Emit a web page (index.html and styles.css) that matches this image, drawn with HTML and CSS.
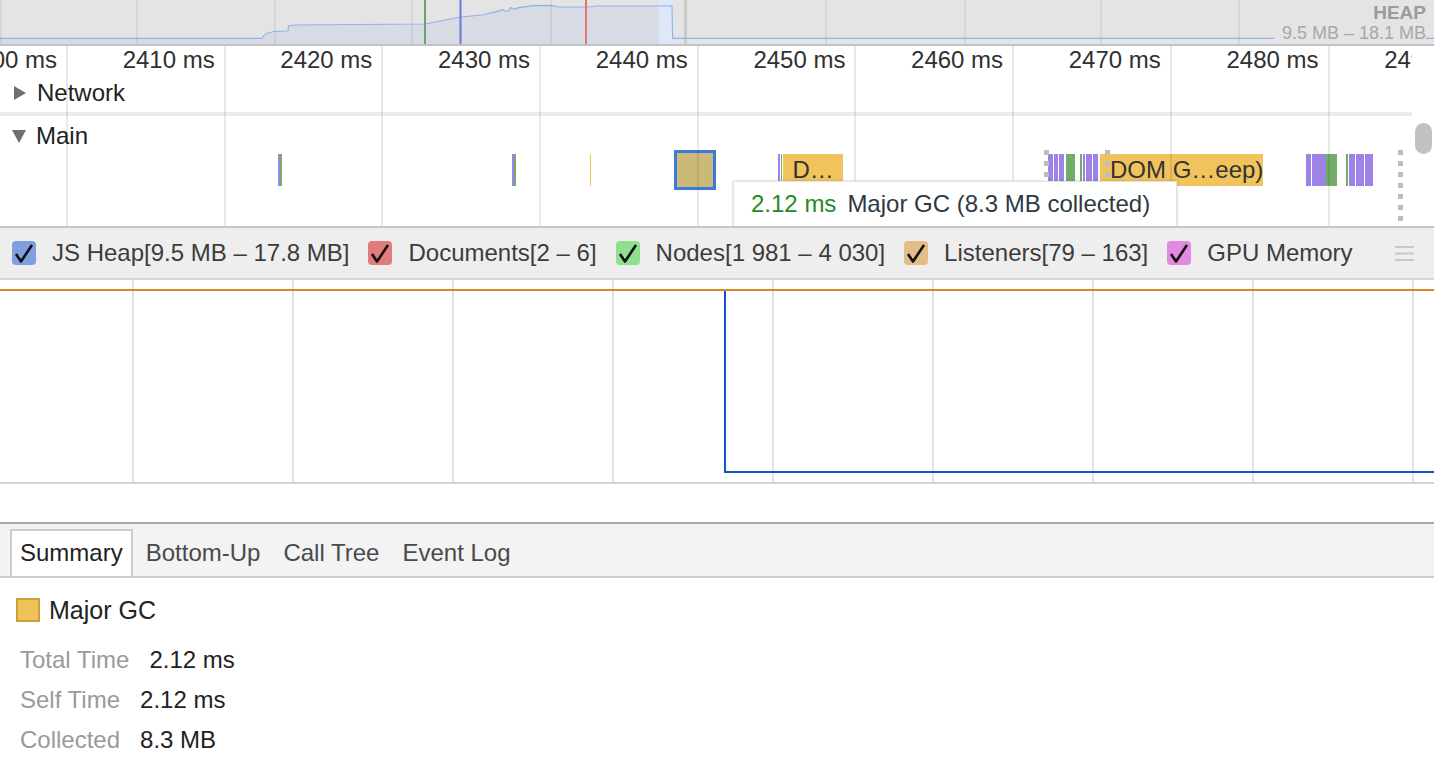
FILE: index.html
```html
<!DOCTYPE html>
<html>
<head>
<meta charset="utf-8">
<title>Performance</title>
<link rel="stylesheet" href="styles.css">
</head>
<body>
<div class="app">
  <div class="overview">
    <svg class="overview-chart" width="1434" height="44" viewBox="0 0 1434 44">
      <rect x="659" y="0" width="13.6" height="44" fill="#dfe8f8"/>
      <path d="M0,38.3 L262,38.3 C263,35 266,33 274,31.5 L288,31 L288.5,26 L294,25 L424.7,24 L460.5,17 L482,15 L496,11.7 L503,9.7 L505,11 L508.7,11 L510.6,7.5 L514,9 L519,7.7 L532.6,5.7 L551,5.3 L558,7 L587.7,7 L597,6 L659,6 L659,44 L0,44 Z" fill="#d7dbe3"/>
      <g fill="rgba(0,0,0,0.06)">
        <rect x="0" y="0" width="2" height="44"/>
        <rect x="136" y="0" width="2" height="44"/>
        <rect x="274" y="0" width="2" height="44"/>
        <rect x="411" y="0" width="2" height="44"/>
        <rect x="550" y="0" width="2" height="44"/>
        <rect x="825" y="0" width="2" height="44"/>
        <rect x="964" y="0" width="2" height="44"/>
        <rect x="1100" y="0" width="2" height="44"/>
        <rect x="1238" y="0" width="2" height="44"/>
      </g>
      <rect x="684" y="0" width="3" height="44" fill="#cbcbcb"/>
      <path d="M0,38.3 L262,38.3 C263,35 266,33 274,31.5 L288,31 L288.5,26 L294,25 L424.7,24 L460.5,17 L482,15 L496,11.7 L503,9.7 L505,11 L508.7,11 L510.6,7.5 L514,9 L519,7.7 L532.6,5.7 L551,5.3 L558,7 L587.7,7 L597,6 L672,6 L672.6,38.3 L1434,38.3" fill="none" stroke="#8fb2ec" stroke-width="1.2"/>
      <rect x="424" y="0" width="2" height="44" fill="#6aa56a"/>
      <rect x="459.5" y="0" width="2" height="44" fill="#6c78e0"/>
      <rect x="585" y="0" width="2" height="44" fill="#e77272"/>
    </svg>
    <div class="heap-label">
      <div class="heap-title">HEAP</div>
      <div class="heap-range">9.5 MB – 18.1 MB</div>
    </div>
  </div>

  <div class="timeline">
    <div class="ruler">
      <div class="tick tick-first">2400 ms</div>
      <div class="tick">2410 ms</div>
      <div class="tick">2420 ms</div>
      <div class="tick">2430 ms</div>
      <div class="tick">2440 ms</div>
      <div class="tick">2450 ms</div>
      <div class="tick">2460 ms</div>
      <div class="tick">2470 ms</div>
      <div class="tick">2480 ms</div>
      <div class="tick">2490 ms</div>
    </div>
    <div class="track-network">
      <div class="track-title"><span class="tri-right"></span>Network</div>
    </div>
    <div class="track-sep"></div>
    <div class="track-main">
      <div class="track-title"><span class="tri-down"></span>Main</div>

      <div class="ev ev-p" style="left:278px;width:1.5px"></div>
      <div class="ev ev-g" style="left:280px;width:1.5px"></div>
      <div class="ev ev-p" style="left:512px;width:1.5px"></div>
      <div class="ev ev-g" style="left:514px;width:1.5px"></div>
      <div class="ev ev-y" style="left:590px;width:1px"></div>

      <div class="ev-sel" style="left:674px;width:42px"></div>

      <div class="ev ev-p" style="left:778px;width:1.5px"></div>
      <div class="ev ev-g" style="left:780.5px;width:1.5px"></div>
      <div class="ev ev-y ev-label" style="left:782.5px;width:60.5px">D…</div>

      <div class="ev ev-p" style="left:1048px;width:5px"></div>
      <div class="ev ev-p" style="left:1054px;width:4px"></div>
      <div class="ev ev-p" style="left:1059px;width:4.5px"></div>
      <div class="ev ev-g" style="left:1066px;width:9px"></div>
      <div class="ev ev-g" style="left:1080px;width:1.5px"></div>
      <div class="ev ev-p" style="left:1082.5px;width:2px"></div>
      <div class="ev ev-p" style="left:1086px;width:5.5px"></div>
      <div class="ev ev-p" style="left:1092.5px;width:5px"></div>
      <div class="ev ev-y ev-label" style="left:1100px;width:163px">DOM G…eep)</div>

      <div class="ev ev-p" style="left:1306px;width:5px"></div>
      <div class="ev ev-p" style="left:1312px;width:14px"></div>
      <div class="ev ev-g" style="left:1326px;width:11px"></div>
      <div class="ev ev-g" style="left:1346px;width:1.5px"></div>
      <div class="ev ev-p" style="left:1349px;width:6px"></div>
      <div class="ev ev-p" style="left:1356px;width:8px"></div>
      <div class="ev ev-p" style="left:1365px;width:8px"></div>

      <div class="dots" style="left:1044px;height:30px"></div>
      <div class="dots" style="left:1105px;height:30px"></div>
      <div class="dots" style="left:1398px;height:76px"></div>

      <div class="scroll-thumb"></div>
    </div>
    <div class="grid-overlay"></div>
    <div class="tooltip"><span class="tt-time">2.12 ms</span>Major GC (8.3 MB collected)</div>
  </div>

  <div class="counters-bar">
    <div class="counter">
      <span class="cb cb-heap"><svg viewBox="0 0 24 24" width="24" height="24"><path d="M4 13 L9 20.5 L20 4" fill="none" stroke="#111" stroke-width="2.6" stroke-linejoin="round"/></svg></span>
      <span class="counter-label">JS Heap[9.5 MB – 17.8 MB]</span>
    </div>
    <div class="counter">
      <span class="cb cb-docs"><svg viewBox="0 0 24 24" width="24" height="24"><path d="M4 13 L9 20.5 L20 4" fill="none" stroke="#111" stroke-width="2.6" stroke-linejoin="round"/></svg></span>
      <span class="counter-label">Documents[2 – 6]</span>
    </div>
    <div class="counter">
      <span class="cb cb-nodes"><svg viewBox="0 0 24 24" width="24" height="24"><path d="M4 13 L9 20.5 L20 4" fill="none" stroke="#111" stroke-width="2.6" stroke-linejoin="round"/></svg></span>
      <span class="counter-label">Nodes[1 981 – 4 030]</span>
    </div>
    <div class="counter">
      <span class="cb cb-listeners"><svg viewBox="0 0 24 24" width="24" height="24"><path d="M4 13 L9 20.5 L20 4" fill="none" stroke="#111" stroke-width="2.6" stroke-linejoin="round"/></svg></span>
      <span class="counter-label">Listeners[79 – 163]</span>
    </div>
    <div class="counter">
      <span class="cb cb-gpu"><svg viewBox="0 0 24 24" width="24" height="24"><path d="M4 13 L9 20.5 L20 4" fill="none" stroke="#111" stroke-width="2.6" stroke-linejoin="round"/></svg></span>
      <span class="counter-label">GPU Memory</span>
    </div>
    <svg class="menu-icon" width="19" height="15" viewBox="0 0 19 15">
      <rect x="0" y="0" width="19" height="2" fill="#c8c8c8"/>
      <rect x="0" y="6.5" width="19" height="2" fill="#c8c8c8"/>
      <rect x="0" y="13" width="19" height="2" fill="#c8c8c8"/>
    </svg>
  </div>

  <div class="counter-graph">
    <svg class="graph-svg" width="1434" height="202" viewBox="0 0 1434 202">
      <line x1="0" y1="10" x2="1434" y2="10" stroke="#d68a26" stroke-width="2"/>
      <path d="M725,11 L725,192 L1434,192" fill="none" stroke="#1652cc" stroke-width="2"/>
    </svg>
  </div>

  <div class="spacer"></div>

  <div class="tabs">
    <div class="tab tab-selected">Summary</div>
    <div class="tab">Bottom-Up</div>
    <div class="tab">Call Tree</div>
    <div class="tab">Event Log</div>
  </div>

  <div class="summary">
    <div class="summary-title"><span class="swatch"></span><span>Major GC</span></div>
    <div class="summary-rows">
      <div class="row"><span class="row-label">Total Time</span><span class="row-value">2.12 ms</span></div>
      <div class="row"><span class="row-label">Self Time</span><span class="row-value">2.12 ms</span></div>
      <div class="row"><span class="row-label">Collected</span><span class="row-value">8.3 MB</span></div>
    </div>
  </div>
</div>
</body>
</html>
```

FILE: styles.css
```css
* { box-sizing: border-box; }

html, body {
  margin: 0;
  padding: 0;
}

body {
  width: 1434px;
  height: 770px;
  overflow: hidden;
  background: #ffffff;
  font-family: "Liberation Sans", Arial, sans-serif;
  font-size: 24px;
  color: #333333;
}

/* ---------- overview ---------- */
.overview {
  position: relative;
  height: 46px;
  background: #e4e4e4;
  border-bottom: 2px solid #c2c2c2;
}

.overview-chart { display: block; }

.heap-label {
  position: absolute;
  right: 8px;
  top: 3px;
  display: flex;
  flex-direction: column;
  align-items: flex-end;
}

.heap-title {
  font-weight: bold;
  font-size: 19px;
  line-height: 20px;
  color: #9b9b9b;
}

.heap-range {
  font-size: 18px;
  line-height: 18px;
  margin-top: 1px;
  padding-left: 8px;
  color: #a8a8a8;
  background: #e4e4e4;
}

/* ---------- timeline ---------- */
.timeline {
  position: relative;
  height: 180px;
  overflow: hidden;
}

.ruler {
  display: flex;
  width: 1412px;
  height: 32px;
  overflow: hidden;
  line-height: 28px;
  color: #303030;
}

.tick {
  flex: none;
  width: 157.7px;
  display: flex;
  justify-content: flex-end;
  padding-right: 10px;
  white-space: nowrap;
}

.tick-first { width: 67px; }

.track-network { height: 34px; }

.track-title {
  display: flex;
  align-items: center;
  height: 30px;
  line-height: 30px;
  color: #222222;
}

.tri-right {
  width: 0;
  height: 0;
  margin-left: 14px;
  margin-right: 11px;
  border-left: 12px solid #6e6e6e;
  border-top: 7.5px solid transparent;
  border-bottom: 7.5px solid transparent;
}

.tri-down {
  width: 0;
  height: 0;
  margin-left: 12px;
  margin-right: 10px;
  border-top: 13px solid #6e6e6e;
  border-left: 7.5px solid transparent;
  border-right: 7.5px solid transparent;
}

.track-sep {
  width: 1412px;
  height: 4px;
  background: #ececec;
}

.track-main {
  position: relative;
  height: 110px;
  padding-top: 5px;
}

.ev {
  position: absolute;
  top: 38px;
  height: 32px;
}

.ev-p { background: #9d83e6; }
.ev-g { background: #72ad68; }
.ev-y { background: #f0c35c; }

.ev-label {
  padding-left: 10px;
  line-height: 32px;
  color: #333333;
  white-space: nowrap;
  overflow: hidden;
}

.ev-sel {
  position: absolute;
  top: 34px;
  height: 40px;
  border: 3px solid #3a7bd8;
  background: #ccb878;
}

.dots {
  position: absolute;
  top: 34px;
  width: 5px;
  background: repeating-linear-gradient(to bottom, #bdbdbd 0 5px, transparent 5px 11px);
  z-index: 1;
}

.scroll-thumb {
  position: absolute;
  right: 2px;
  top: 7px;
  width: 17px;
  height: 31px;
  border-radius: 9px;
  background: #c2c2c2;
}

.grid-overlay {
  position: absolute;
  left: 0;
  top: 0;
  width: 1412px;
  height: 180px;
  pointer-events: none;
  z-index: 2;
  background-image: repeating-linear-gradient(to right, rgba(0, 0, 0, 0.085) 0 2px, transparent 2px 157.7px);
  background-position: 66px 0;
}

.tooltip {
  position: absolute;
  left: 733px;
  top: 135px;
  height: 52px;
  padding: 8px 26px 0 17px;
  line-height: 28px;
  background: #ffffff;
  border: 1px solid #e2e2e2;
  box-shadow: 0 0 3px rgba(0, 0, 0, 0.18);
  color: #303942;
  white-space: nowrap;
  z-index: 3;
}

.tt-time {
  color: #1f8b24;
  margin-right: 11px;
}

/* ---------- counters ---------- */
.counters-bar {
  display: flex;
  align-items: center;
  gap: 19px;
  height: 54px;
  padding-left: 12px;
  background: #eeeeee;
  border-top: 2px solid #c6c6c6;
  border-bottom: 2px solid #d6d6d6;
  color: #3c3c3c;
}

.counter {
  display: flex;
  align-items: center;
  gap: 16px;
  white-space: nowrap;
}

.cb {
  display: block;
  width: 24px;
  height: 24px;
  border-radius: 4px;
}

.cb svg { display: block; }

.cb-heap { background: #7fa0e0; }
.cb-docs { background: #e27b7b; }
.cb-nodes { background: #8ee08e; }
.cb-listeners { background: #e2bd87; }
.cb-gpu { background: #e08ae0; }

.menu-icon {
  display: block;
  margin-left: auto;
  margin-right: 20px;
}

/* ---------- counter graph ---------- */
.counter-graph {
  height: 204px;
  border-bottom: 2px solid #d3d3d3;
  background-image: repeating-linear-gradient(to right, #e3e3e3 0 2px, transparent 2px 160px);
  background-position: 132px 0;
}

.graph-svg { display: block; }

.spacer { height: 38px; }

/* ---------- tabs ---------- */
.tabs {
  display: flex;
  align-items: flex-end;
  gap: 3px;
  height: 56px;
  padding-left: 10px;
  background: #f3f3f3;
  border-top: 2px solid #a9a9a9;
  border-bottom: 2px solid #cfcfcf;
}

.tab {
  height: 47px;
  padding: 0 8px;
  line-height: 43px;
  border: 2px solid transparent;
  border-bottom: none;
  color: #4a4a4a;
  white-space: nowrap;
}

.tab-selected {
  background: #ffffff;
  border-color: #cccccc;
  color: #222222;
}

/* ---------- summary ---------- */
.summary {
  padding: 16px 0 0 16px;
}

.summary-title {
  display: flex;
  align-items: center;
  gap: 9px;
  height: 32px;
  font-size: 25px;
  color: #222222;
}

.swatch {
  display: block;
  width: 24px;
  height: 24px;
  background: #f0c35a;
  border: 2px solid #c9a23e;
}

.summary-rows {
  margin-top: 14px;
  padding-left: 4px;
}

.row {
  display: flex;
  line-height: 40px;
}

.row-label { color: #9a9a9a; }

.row-value {
  margin-left: 20px;
  color: #222222;
}
```
